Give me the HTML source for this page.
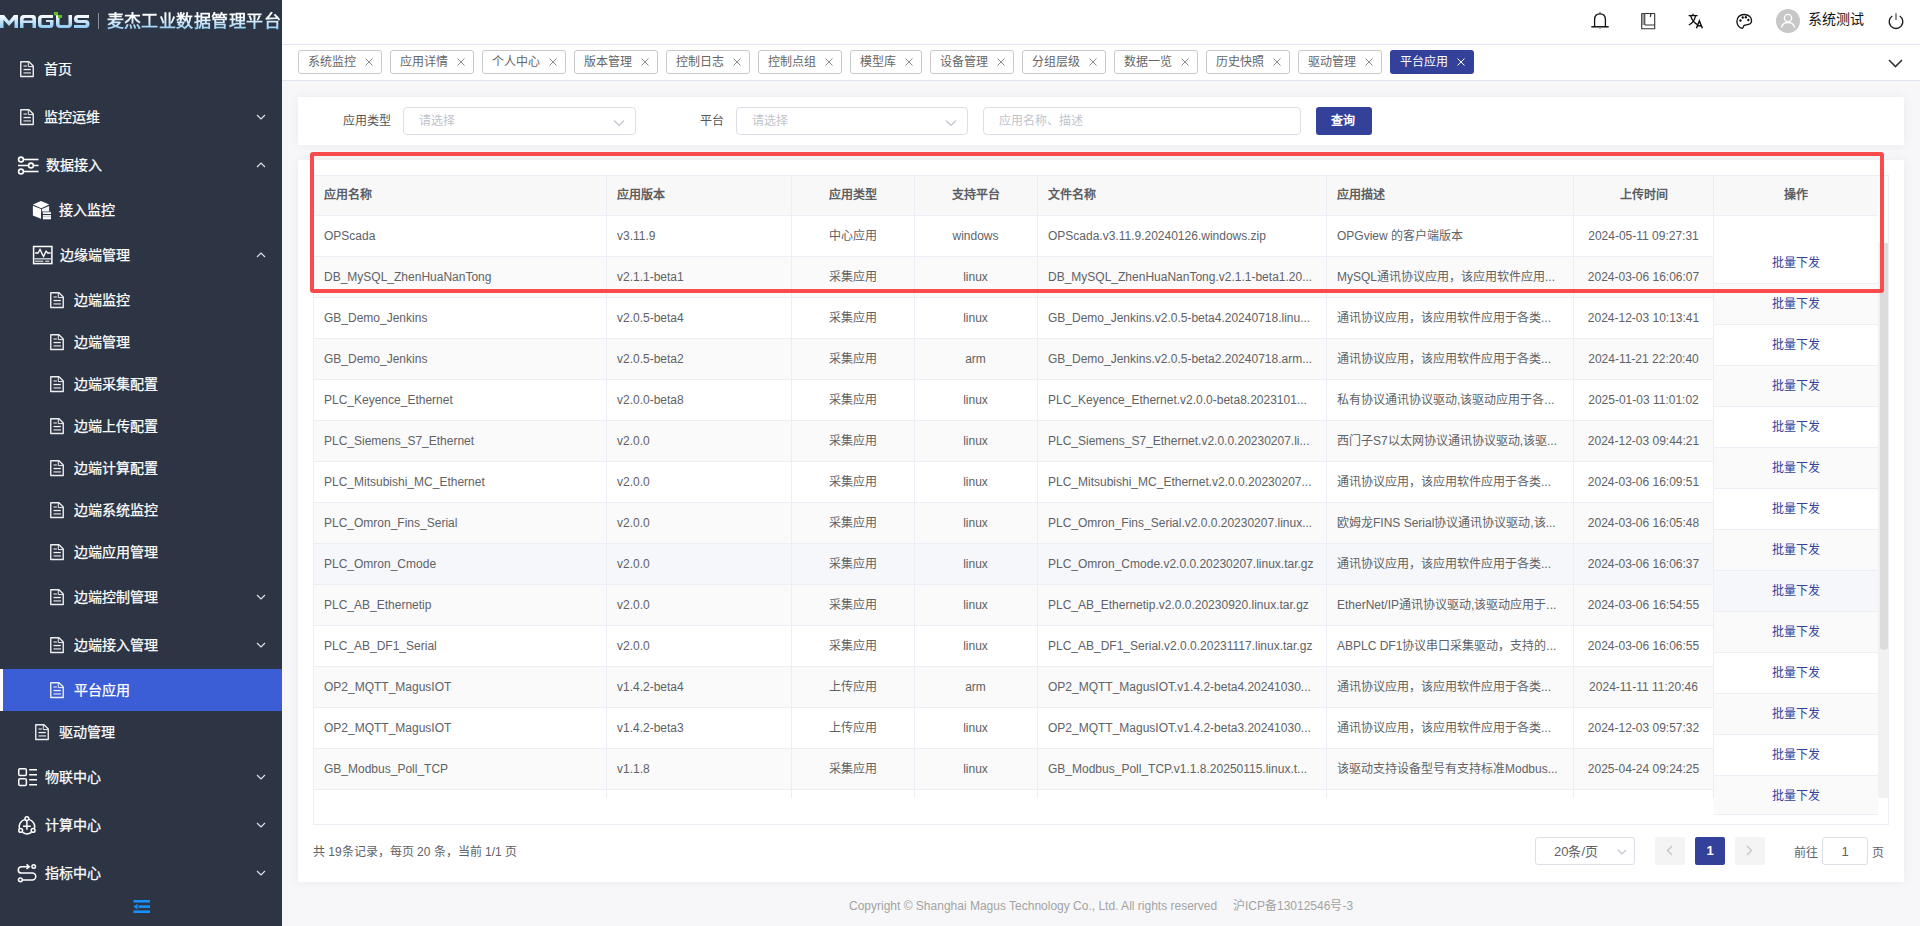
<!DOCTYPE html>
<html lang="zh-CN"><head><meta charset="utf-8"><title>平台应用</title>
<style>
html,body{margin:0;padding:0;width:1920px;height:926px;overflow:hidden;background:#f7f7f9;font-family:"Liberation Sans",sans-serif;}
</style></head><body>
<div id="sb" style="position:absolute;left:0;top:0;width:282px;height:926px;background:#2d3545;overflow:hidden">
<svg style="position:absolute;left:0;top:10px" width="100" height="24" viewBox="0 0 100 24">
<defs><linearGradient id="lg" x1="0" y1="0" x2="0" y2="1"><stop offset="0" stop-color="#ffffff"/><stop offset="1" stop-color="#8ccaf5"/></linearGradient></defs>
<g fill="url(#lg)">
<path d="M0 5 H4 L9 11 L14 5 H18 V18 H14.5 V10 L9 16 L3.5 10 V18 H0 Z"/>
<path d="M20 18 V9 Q20 5 24 5 H33 Q36 5 36 9 V18 H32.5 V13 H23.5 V18 Z M23.5 10.5 H32.5 V9.5 Q32.5 8 31 8 H25 Q23.5 8 23.5 9.5 Z"/>
<path d="M38 9 Q38 5 42 5 H53 V8 H42.5 Q41.5 8 41.5 9 V14 Q41.5 15 42.5 15 H50 V12 H46 V10 H53.5 V14.5 Q53.5 18 50 18 H42 Q38 18 38 14 Z"/>
<path d="M56 5 H59.5 V14 Q59.5 15 60.5 15 H67.5 Q68.5 15 68.5 14 V5 H72 V14 Q72 18 68 18 H60 Q56 18 56 14 Z"/>
<path d="M74 5 H89 V8 H78 Q77.5 8 77.5 9 Q77.5 10 78.5 10 H85.5 Q89.5 10 89.5 14 Q89.5 18 85.5 18 H74 V15 H85 Q86 15 86 14 Q86 13 85 13 H78 Q74 13 74 9 Q74 5 78 5 Z"/>
</g>
<rect x="54" y="2" width="4" height="3.4" fill="#5fbf2a"/>
<rect x="58" y="5" width="4" height="3" fill="#5fbf2a"/>
</svg>
<div style="position:absolute;left:98px;top:13px;width:1px;height:16px;background:#8a8f99"></div>
<div style="position:absolute;left:106.5px;top:11px;font-size:17px;letter-spacing:0.45px;line-height:22px;font-weight:900;color:#bfe3fb;background:linear-gradient(#ffffff 25%,#8fcdf5 85%);-webkit-background-clip:text;background-clip:text;-webkit-text-fill-color:transparent;white-space:nowrap">麦杰工业数据管理平台</div>
<div style="position:absolute;left:0;top:669px;width:282px;height:42px;background:#3b5dd6"></div>
<div style="position:absolute;left:0;top:669px;width:3px;height:42px;background:#ffffff"></div>
<svg style="position:absolute;left:20px;top:61px" width="15" height="18" viewBox="0 0 15 18">
<path d="M0.75 0.75 H9 L13.25 5 V15.5 H0.75 Z" fill="none" stroke="#ededed" stroke-width="1.4" stroke-linejoin="round"/>
<path d="M8.3 1 V5.6 H13" fill="none" stroke="#ededed" stroke-width="1"/>
<rect x="3.5" y="4.3" width="3.4" height="1.4" fill="#ffffff" fill-opacity="0.72"/>
<rect x="3.5" y="7.9" width="7.3" height="1.3" fill="#f2f2f2"/>
<rect x="3.5" y="11" width="7.5" height="1.8" fill="#ffffff" fill-opacity="0.56"/>
</svg>
<div style="position:absolute;left:44px;top:59px;height:20px;line-height:20px;font-size:14px;color:#ffffff;-webkit-text-stroke:0.25px #ffffff;white-space:nowrap">首页</div>
<svg style="position:absolute;left:20px;top:109px" width="15" height="18" viewBox="0 0 15 18">
<path d="M0.75 0.75 H9 L13.25 5 V15.5 H0.75 Z" fill="none" stroke="#ededed" stroke-width="1.4" stroke-linejoin="round"/>
<path d="M8.3 1 V5.6 H13" fill="none" stroke="#ededed" stroke-width="1"/>
<rect x="3.5" y="4.3" width="3.4" height="1.4" fill="#ffffff" fill-opacity="0.72"/>
<rect x="3.5" y="7.9" width="7.3" height="1.3" fill="#f2f2f2"/>
<rect x="3.5" y="11" width="7.5" height="1.8" fill="#ffffff" fill-opacity="0.56"/>
</svg>
<div style="position:absolute;left:44px;top:107px;height:20px;line-height:20px;font-size:14px;color:#ffffff;-webkit-text-stroke:0.25px #ffffff;white-space:nowrap">监控运维</div>
<svg style="position:absolute;left:256px;top:114px" width="10" height="6" viewBox="0 0 10 6"><path d="M1 1 L5 5 L9 1" fill="none" stroke="#dfe1e6" stroke-width="1.2"/></svg>
<svg style="position:absolute;left:17px;top:156px" width="23" height="20" viewBox="0 0 23 20">
<g fill="none" stroke="#ffffff" stroke-width="1.6">
<circle cx="4" cy="3.5" r="2.4"/><path d="M6.4 3.5 H21.5"/>
<circle cx="14" cy="9.5" r="2.4"/><path d="M1 9.5 H11.6 M16.4 9.5 H21.5"/>
<circle cx="4" cy="15.5" r="2.4"/><path d="M6.4 15.5 H21.5"/>
</g></svg>
<div style="position:absolute;left:46px;top:155px;height:20px;line-height:20px;font-size:14px;color:#ffffff;-webkit-text-stroke:0.25px #ffffff;white-space:nowrap">数据接入</div>
<svg style="position:absolute;left:256px;top:162px" width="10" height="6" viewBox="0 0 10 6"><path d="M1 5 L5 1 L9 5" fill="none" stroke="#dfe1e6" stroke-width="1.2"/></svg>
<svg style="position:absolute;left:32px;top:200px" width="20" height="20" viewBox="0 0 20 20">
<path d="M0.9 4.4 L9 0.9 L17.2 4.4 L9.3 8.3 Z" fill="#ffffff"/>
<path d="M0.9 5.7 L9 9 V18.7 L0.9 15.4 Z" fill="#ffffff"/>
<path d="M9.9 9 L17.1 6 V11.5 H9.9 Z" fill="#f4f4f4"/>
<rect x="10.9" y="11.9" width="8.1" height="2.1" fill="#ffffff"/>
<rect x="10.9" y="11.9" width="8.1" height="0.9" fill="#c2c4cc"/>
<rect x="10.9" y="15.1" width="8.1" height="4.2" fill="#ffffff"/>
<rect x="10.9" y="16.2" width="8.1" height="1.1" fill="#c2c4cc"/>
</svg>
<div style="position:absolute;left:59px;top:200px;height:20px;line-height:20px;font-size:14px;color:#ffffff;-webkit-text-stroke:0.25px #ffffff;white-space:nowrap">接入监控</div>
<svg style="position:absolute;left:32px;top:245px" width="22" height="20" viewBox="0 0 22 20">
<rect x="1.6" y="1.5" width="18.3" height="17.1" fill="none" stroke="#ffffff" stroke-width="1.5"/>
<path d="M3.1 8 H6 L8 4.4 L11.5 11.5 L14.1 6.3 L15.8 8 H18.7" fill="none" stroke="#ffffff" stroke-width="1.4" stroke-linejoin="miter"/>
<rect x="2.4" y="13.2" width="16.6" height="1.3" fill="#e0e0e4"/>
<rect x="3.1" y="15.7" width="8.1" height="1" fill="#ffffff"/>
<rect x="13.2" y="15.7" width="4.2" height="1" fill="#ffffff"/>
</svg>
<div style="position:absolute;left:60px;top:245px;height:20px;line-height:20px;font-size:14px;color:#ffffff;-webkit-text-stroke:0.25px #ffffff;white-space:nowrap">边缘端管理</div>
<svg style="position:absolute;left:256px;top:252px" width="10" height="6" viewBox="0 0 10 6"><path d="M1 5 L5 1 L9 5" fill="none" stroke="#dfe1e6" stroke-width="1.2"/></svg>
<svg style="position:absolute;left:50px;top:292px" width="15" height="18" viewBox="0 0 15 18">
<path d="M0.75 0.75 H9 L13.25 5 V15.5 H0.75 Z" fill="none" stroke="#ededed" stroke-width="1.4" stroke-linejoin="round"/>
<path d="M8.3 1 V5.6 H13" fill="none" stroke="#ededed" stroke-width="1"/>
<rect x="3.5" y="4.3" width="3.4" height="1.4" fill="#ffffff" fill-opacity="0.72"/>
<rect x="3.5" y="7.9" width="7.3" height="1.3" fill="#f2f2f2"/>
<rect x="3.5" y="11" width="7.5" height="1.8" fill="#ffffff" fill-opacity="0.56"/>
</svg>
<div style="position:absolute;left:74px;top:290px;height:20px;line-height:20px;font-size:14px;color:#ffffff;-webkit-text-stroke:0.25px #ffffff;white-space:nowrap">边端监控</div>
<svg style="position:absolute;left:50px;top:334px" width="15" height="18" viewBox="0 0 15 18">
<path d="M0.75 0.75 H9 L13.25 5 V15.5 H0.75 Z" fill="none" stroke="#ededed" stroke-width="1.4" stroke-linejoin="round"/>
<path d="M8.3 1 V5.6 H13" fill="none" stroke="#ededed" stroke-width="1"/>
<rect x="3.5" y="4.3" width="3.4" height="1.4" fill="#ffffff" fill-opacity="0.72"/>
<rect x="3.5" y="7.9" width="7.3" height="1.3" fill="#f2f2f2"/>
<rect x="3.5" y="11" width="7.5" height="1.8" fill="#ffffff" fill-opacity="0.56"/>
</svg>
<div style="position:absolute;left:74px;top:332px;height:20px;line-height:20px;font-size:14px;color:#ffffff;-webkit-text-stroke:0.25px #ffffff;white-space:nowrap">边端管理</div>
<svg style="position:absolute;left:50px;top:376px" width="15" height="18" viewBox="0 0 15 18">
<path d="M0.75 0.75 H9 L13.25 5 V15.5 H0.75 Z" fill="none" stroke="#ededed" stroke-width="1.4" stroke-linejoin="round"/>
<path d="M8.3 1 V5.6 H13" fill="none" stroke="#ededed" stroke-width="1"/>
<rect x="3.5" y="4.3" width="3.4" height="1.4" fill="#ffffff" fill-opacity="0.72"/>
<rect x="3.5" y="7.9" width="7.3" height="1.3" fill="#f2f2f2"/>
<rect x="3.5" y="11" width="7.5" height="1.8" fill="#ffffff" fill-opacity="0.56"/>
</svg>
<div style="position:absolute;left:74px;top:374px;height:20px;line-height:20px;font-size:14px;color:#ffffff;-webkit-text-stroke:0.25px #ffffff;white-space:nowrap">边端采集配置</div>
<svg style="position:absolute;left:50px;top:418px" width="15" height="18" viewBox="0 0 15 18">
<path d="M0.75 0.75 H9 L13.25 5 V15.5 H0.75 Z" fill="none" stroke="#ededed" stroke-width="1.4" stroke-linejoin="round"/>
<path d="M8.3 1 V5.6 H13" fill="none" stroke="#ededed" stroke-width="1"/>
<rect x="3.5" y="4.3" width="3.4" height="1.4" fill="#ffffff" fill-opacity="0.72"/>
<rect x="3.5" y="7.9" width="7.3" height="1.3" fill="#f2f2f2"/>
<rect x="3.5" y="11" width="7.5" height="1.8" fill="#ffffff" fill-opacity="0.56"/>
</svg>
<div style="position:absolute;left:74px;top:416px;height:20px;line-height:20px;font-size:14px;color:#ffffff;-webkit-text-stroke:0.25px #ffffff;white-space:nowrap">边端上传配置</div>
<svg style="position:absolute;left:50px;top:460px" width="15" height="18" viewBox="0 0 15 18">
<path d="M0.75 0.75 H9 L13.25 5 V15.5 H0.75 Z" fill="none" stroke="#ededed" stroke-width="1.4" stroke-linejoin="round"/>
<path d="M8.3 1 V5.6 H13" fill="none" stroke="#ededed" stroke-width="1"/>
<rect x="3.5" y="4.3" width="3.4" height="1.4" fill="#ffffff" fill-opacity="0.72"/>
<rect x="3.5" y="7.9" width="7.3" height="1.3" fill="#f2f2f2"/>
<rect x="3.5" y="11" width="7.5" height="1.8" fill="#ffffff" fill-opacity="0.56"/>
</svg>
<div style="position:absolute;left:74px;top:458px;height:20px;line-height:20px;font-size:14px;color:#ffffff;-webkit-text-stroke:0.25px #ffffff;white-space:nowrap">边端计算配置</div>
<svg style="position:absolute;left:50px;top:502px" width="15" height="18" viewBox="0 0 15 18">
<path d="M0.75 0.75 H9 L13.25 5 V15.5 H0.75 Z" fill="none" stroke="#ededed" stroke-width="1.4" stroke-linejoin="round"/>
<path d="M8.3 1 V5.6 H13" fill="none" stroke="#ededed" stroke-width="1"/>
<rect x="3.5" y="4.3" width="3.4" height="1.4" fill="#ffffff" fill-opacity="0.72"/>
<rect x="3.5" y="7.9" width="7.3" height="1.3" fill="#f2f2f2"/>
<rect x="3.5" y="11" width="7.5" height="1.8" fill="#ffffff" fill-opacity="0.56"/>
</svg>
<div style="position:absolute;left:74px;top:500px;height:20px;line-height:20px;font-size:14px;color:#ffffff;-webkit-text-stroke:0.25px #ffffff;white-space:nowrap">边端系统监控</div>
<svg style="position:absolute;left:50px;top:544px" width="15" height="18" viewBox="0 0 15 18">
<path d="M0.75 0.75 H9 L13.25 5 V15.5 H0.75 Z" fill="none" stroke="#ededed" stroke-width="1.4" stroke-linejoin="round"/>
<path d="M8.3 1 V5.6 H13" fill="none" stroke="#ededed" stroke-width="1"/>
<rect x="3.5" y="4.3" width="3.4" height="1.4" fill="#ffffff" fill-opacity="0.72"/>
<rect x="3.5" y="7.9" width="7.3" height="1.3" fill="#f2f2f2"/>
<rect x="3.5" y="11" width="7.5" height="1.8" fill="#ffffff" fill-opacity="0.56"/>
</svg>
<div style="position:absolute;left:74px;top:542px;height:20px;line-height:20px;font-size:14px;color:#ffffff;-webkit-text-stroke:0.25px #ffffff;white-space:nowrap">边端应用管理</div>
<svg style="position:absolute;left:50px;top:589px" width="15" height="18" viewBox="0 0 15 18">
<path d="M0.75 0.75 H9 L13.25 5 V15.5 H0.75 Z" fill="none" stroke="#ededed" stroke-width="1.4" stroke-linejoin="round"/>
<path d="M8.3 1 V5.6 H13" fill="none" stroke="#ededed" stroke-width="1"/>
<rect x="3.5" y="4.3" width="3.4" height="1.4" fill="#ffffff" fill-opacity="0.72"/>
<rect x="3.5" y="7.9" width="7.3" height="1.3" fill="#f2f2f2"/>
<rect x="3.5" y="11" width="7.5" height="1.8" fill="#ffffff" fill-opacity="0.56"/>
</svg>
<div style="position:absolute;left:74px;top:587px;height:20px;line-height:20px;font-size:14px;color:#ffffff;-webkit-text-stroke:0.25px #ffffff;white-space:nowrap">边端控制管理</div>
<svg style="position:absolute;left:256px;top:594px" width="10" height="6" viewBox="0 0 10 6"><path d="M1 1 L5 5 L9 1" fill="none" stroke="#dfe1e6" stroke-width="1.2"/></svg>
<svg style="position:absolute;left:50px;top:637px" width="15" height="18" viewBox="0 0 15 18">
<path d="M0.75 0.75 H9 L13.25 5 V15.5 H0.75 Z" fill="none" stroke="#ededed" stroke-width="1.4" stroke-linejoin="round"/>
<path d="M8.3 1 V5.6 H13" fill="none" stroke="#ededed" stroke-width="1"/>
<rect x="3.5" y="4.3" width="3.4" height="1.4" fill="#ffffff" fill-opacity="0.72"/>
<rect x="3.5" y="7.9" width="7.3" height="1.3" fill="#f2f2f2"/>
<rect x="3.5" y="11" width="7.5" height="1.8" fill="#ffffff" fill-opacity="0.56"/>
</svg>
<div style="position:absolute;left:74px;top:635px;height:20px;line-height:20px;font-size:14px;color:#ffffff;-webkit-text-stroke:0.25px #ffffff;white-space:nowrap">边端接入管理</div>
<svg style="position:absolute;left:256px;top:642px" width="10" height="6" viewBox="0 0 10 6"><path d="M1 1 L5 5 L9 1" fill="none" stroke="#dfe1e6" stroke-width="1.2"/></svg>
<svg style="position:absolute;left:50px;top:682px" width="15" height="18" viewBox="0 0 15 18">
<path d="M0.75 0.75 H9 L13.25 5 V15.5 H0.75 Z" fill="none" stroke="#ededed" stroke-width="1.4" stroke-linejoin="round"/>
<path d="M8.3 1 V5.6 H13" fill="none" stroke="#ededed" stroke-width="1"/>
<rect x="3.5" y="4.3" width="3.4" height="1.4" fill="#ffffff" fill-opacity="0.72"/>
<rect x="3.5" y="7.9" width="7.3" height="1.3" fill="#f2f2f2"/>
<rect x="3.5" y="11" width="7.5" height="1.8" fill="#ffffff" fill-opacity="0.56"/>
</svg>
<div style="position:absolute;left:74px;top:680px;height:20px;line-height:20px;font-size:14px;color:#ffffff;-webkit-text-stroke:0.25px #ffffff;white-space:nowrap">平台应用</div>
<svg style="position:absolute;left:35px;top:724px" width="15" height="18" viewBox="0 0 15 18">
<path d="M0.75 0.75 H9 L13.25 5 V15.5 H0.75 Z" fill="none" stroke="#ededed" stroke-width="1.4" stroke-linejoin="round"/>
<path d="M8.3 1 V5.6 H13" fill="none" stroke="#ededed" stroke-width="1"/>
<rect x="3.5" y="4.3" width="3.4" height="1.4" fill="#ffffff" fill-opacity="0.72"/>
<rect x="3.5" y="7.9" width="7.3" height="1.3" fill="#f2f2f2"/>
<rect x="3.5" y="11" width="7.5" height="1.8" fill="#ffffff" fill-opacity="0.56"/>
</svg>
<div style="position:absolute;left:59px;top:722px;height:20px;line-height:20px;font-size:14px;color:#ffffff;-webkit-text-stroke:0.25px #ffffff;white-space:nowrap">驱动管理</div>
<svg style="position:absolute;left:17px;top:767px" width="22" height="21" viewBox="0 0 22 21">
<g fill="none" stroke="#ffffff" stroke-width="1.5">
<rect x="1.75" y="1.65" width="7.6" height="6.8" rx="1.3"/><rect x="1.75" y="11.75" width="7.6" height="6.7" rx="1.3"/>
<path d="M12.2 2.7 H20 M12.2 7.7 H20 M12.2 12.8 H20 M12.2 17.8 H20" stroke-width="1.4"/>
</g></svg>
<div style="position:absolute;left:45px;top:767px;height:20px;line-height:20px;font-size:14px;color:#ffffff;-webkit-text-stroke:0.25px #ffffff;white-space:nowrap">物联中心</div>
<svg style="position:absolute;left:256px;top:774px" width="10" height="6" viewBox="0 0 10 6"><path d="M1 1 L5 5 L9 1" fill="none" stroke="#dfe1e6" stroke-width="1.2"/></svg>
<svg style="position:absolute;left:17px;top:815px" width="21" height="21" viewBox="0 0 21 21">
<g fill="none" stroke="#ffffff" stroke-width="1.5">
<path d="M7.9 4.4 A7.6 7.6 0 0 0 2.5 13.6 M12 4.4 A7.6 7.6 0 0 1 17.4 13.6 M5.6 17.4 A7.6 7.6 0 0 0 14.4 17.4"/>
<circle cx="9.9" cy="3.7" r="1.9"/><circle cx="3.7" cy="15.4" r="1.9"/><circle cx="16.1" cy="15.4" r="1.9"/>
<path d="M9.9 5.7 V14.8 M6 11.2 H13.8"/>
</g></svg>
<div style="position:absolute;left:45px;top:815px;height:20px;line-height:20px;font-size:14px;color:#ffffff;-webkit-text-stroke:0.25px #ffffff;white-space:nowrap">计算中心</div>
<svg style="position:absolute;left:256px;top:822px" width="10" height="6" viewBox="0 0 10 6"><path d="M1 1 L5 5 L9 1" fill="none" stroke="#dfe1e6" stroke-width="1.2"/></svg>
<svg style="position:absolute;left:17px;top:863px" width="21" height="21" viewBox="0 0 21 21">
<g fill="none" stroke="#ffffff" stroke-width="1.5">
<path d="M12 3.7 H4.5 A3.2 3.2 0 0 0 4.5 10.1 H15.3 A3.45 3.45 0 0 1 15.3 17 H5.6"/>
<path d="M9.5 1.4 L12.3 3.7 L9.5 6"/>
<circle cx="16.7" cy="3.6" r="1.75"/><circle cx="3.4" cy="16.8" r="1.9"/>
</g></svg>
<div style="position:absolute;left:45px;top:863px;height:20px;line-height:20px;font-size:14px;color:#ffffff;-webkit-text-stroke:0.25px #ffffff;white-space:nowrap">指标中心</div>
<svg style="position:absolute;left:256px;top:870px" width="10" height="6" viewBox="0 0 10 6"><path d="M1 1 L5 5 L9 1" fill="none" stroke="#dfe1e6" stroke-width="1.2"/></svg>
<svg style="position:absolute;left:133px;top:900px" width="18" height="14" viewBox="0 0 18 14">
<rect x="0.5" y="0" width="16.5" height="2.6" fill="#1890ff"/>
<rect x="5.5" y="5.3" width="11.5" height="2.6" fill="#1890ff"/>
<path d="M0.5 6.6 L4.5 3.8 V9.4 Z" fill="#1890ff"/>
<rect x="0.5" y="10.4" width="16.5" height="2.6" fill="#1890ff"/>
</svg>
</div>
<div style="position:absolute;left:282px;top:0;width:1638px;height:45px;background:#fff;border-bottom:1px solid #e3e8f0;box-sizing:border-box"></div>
<svg style="position:absolute;left:1590px;top:11px" width="20" height="20" viewBox="0 0 20 20">
<path d="M4.6 15.6 V8.6 Q4.6 2.8 10 2.8 Q15.4 2.8 15.4 8.6 V15.6" fill="none" stroke="#111" stroke-width="1.3"/>
<path d="M1.3 15.8 H18.7" stroke="#111" stroke-width="1.5"/>
<path d="M8.9 2.4 L10 1 L11.1 2.4 Z" fill="#111"/>
<path d="M8.8 16.6 H11.2 L10 18.4 Z" fill="#888"/>
</svg>
<svg style="position:absolute;left:1640px;top:12px" width="17" height="18" viewBox="0 0 17 18">
<rect x="1.7" y="1.5" width="13" height="15.3" rx="0.4" fill="none" stroke="#333" stroke-width="1.1"/>
<rect x="2.1" y="1.9" width="2.5" height="11" fill="#9a9a9a"/>
<path d="M4.8 1.8 V13 H14.5" fill="none" stroke="#333" stroke-width="1"/>
<path d="M10.8 2 L10.4 4.8" stroke="#333" stroke-width="1.3"/>
</svg>
<svg style="position:absolute;left:1688px;top:13px" width="16" height="17" viewBox="0 0 16 17">
<g fill="none" stroke="#111" stroke-width="1.3">
<path d="M5 0.8 V2.4"/><path d="M0.6 2.6 H9.6"/>
<path d="M2.6 2.8 Q4.5 9 9.4 11.6"/><path d="M7.6 2.8 Q6 9.6 0.8 12"/>
</g>
<g fill="none" stroke="#111" stroke-width="1.5">
<path d="M8.4 15.2 L11.4 8 L14.4 15.2"/><path d="M9.6 12.8 H13.2"/>
</g>
</svg>
<svg style="position:absolute;left:1735.5px;top:12.5px" width="17" height="17" viewBox="0 0 19 18" preserveAspectRatio="none">
<path d="M9 1.5 C4 1.5 1 5 1 9 C1 12.5 3.8 16.2 6.8 16.2 C8.5 16.2 7.8 13.8 9.2 13 C11 12 17.2 13.5 17.4 8.5 C17.6 4.5 14 1.5 9 1.5 Z" fill="none" stroke="#111" stroke-width="1.5"/>
<circle cx="5" cy="8" r="1.3" fill="#111"/><circle cx="7.5" cy="4.8" r="1.3" fill="#111"/><circle cx="11" cy="4.5" r="1.3" fill="#111"/><circle cx="13.8" cy="7.4" r="1.3" fill="#111"/>
</svg>
<svg style="position:absolute;left:1776px;top:9px" width="24" height="24" viewBox="0 0 24 24">
<circle cx="12" cy="12" r="12" fill="#c7c7c7"/>
<circle cx="12" cy="9" r="3.6" fill="none" stroke="#fff" stroke-width="1.3"/>
<path d="M5.5 18.5 Q6.5 13.5 12 13.5 Q17.5 13.5 18.5 18.5" fill="none" stroke="#fff" stroke-width="1.3"/>
</svg>
<div style="position:absolute;left:1808px;top:9px;font-size:14px;line-height:20px;color:#111;white-space:nowrap">系统测试</div>
<svg style="position:absolute;left:1887px;top:12px" width="18" height="18" viewBox="0 0 18 18">
<path d="M5.3 4 A6.8 6.8 0 1 0 12.7 4" fill="none" stroke="#222" stroke-width="1.4"/>
<path d="M9 1.2 V8" stroke="#777" stroke-width="1.6"/>
</svg>
<div style="position:absolute;left:282px;top:45px;width:1638px;height:36px;background:#fff;border-bottom:1px solid #dfe5ee;box-sizing:border-box"></div>
<div style="position:absolute;left:298px;top:50px;width:84px;height:24px;box-sizing:border-box;border-radius:3px;border:1px solid #c9c9c9;background:#fff"></div>
<div style="position:absolute;left:308px;top:54px;font-size:12px;line-height:16px;color:#666;white-space:nowrap">系统监控</div>
<svg style="position:absolute;left:365px;top:58px" width="8" height="8" viewBox="0 0 8 8"><path d="M0.5 0.5 L7.5 7.5 M7.5 0.5 L0.5 7.5" stroke="#8a8a8a" stroke-width="1"/></svg>
<div style="position:absolute;left:390px;top:50px;width:84px;height:24px;box-sizing:border-box;border-radius:3px;border:1px solid #c9c9c9;background:#fff"></div>
<div style="position:absolute;left:400px;top:54px;font-size:12px;line-height:16px;color:#666;white-space:nowrap">应用详情</div>
<svg style="position:absolute;left:457px;top:58px" width="8" height="8" viewBox="0 0 8 8"><path d="M0.5 0.5 L7.5 7.5 M7.5 0.5 L0.5 7.5" stroke="#8a8a8a" stroke-width="1"/></svg>
<div style="position:absolute;left:482px;top:50px;width:84px;height:24px;box-sizing:border-box;border-radius:3px;border:1px solid #c9c9c9;background:#fff"></div>
<div style="position:absolute;left:492px;top:54px;font-size:12px;line-height:16px;color:#666;white-space:nowrap">个人中心</div>
<svg style="position:absolute;left:549px;top:58px" width="8" height="8" viewBox="0 0 8 8"><path d="M0.5 0.5 L7.5 7.5 M7.5 0.5 L0.5 7.5" stroke="#8a8a8a" stroke-width="1"/></svg>
<div style="position:absolute;left:574px;top:50px;width:84px;height:24px;box-sizing:border-box;border-radius:3px;border:1px solid #c9c9c9;background:#fff"></div>
<div style="position:absolute;left:584px;top:54px;font-size:12px;line-height:16px;color:#666;white-space:nowrap">版本管理</div>
<svg style="position:absolute;left:641px;top:58px" width="8" height="8" viewBox="0 0 8 8"><path d="M0.5 0.5 L7.5 7.5 M7.5 0.5 L0.5 7.5" stroke="#8a8a8a" stroke-width="1"/></svg>
<div style="position:absolute;left:666px;top:50px;width:84px;height:24px;box-sizing:border-box;border-radius:3px;border:1px solid #c9c9c9;background:#fff"></div>
<div style="position:absolute;left:676px;top:54px;font-size:12px;line-height:16px;color:#666;white-space:nowrap">控制日志</div>
<svg style="position:absolute;left:733px;top:58px" width="8" height="8" viewBox="0 0 8 8"><path d="M0.5 0.5 L7.5 7.5 M7.5 0.5 L0.5 7.5" stroke="#8a8a8a" stroke-width="1"/></svg>
<div style="position:absolute;left:758px;top:50px;width:84px;height:24px;box-sizing:border-box;border-radius:3px;border:1px solid #c9c9c9;background:#fff"></div>
<div style="position:absolute;left:768px;top:54px;font-size:12px;line-height:16px;color:#666;white-space:nowrap">控制点组</div>
<svg style="position:absolute;left:825px;top:58px" width="8" height="8" viewBox="0 0 8 8"><path d="M0.5 0.5 L7.5 7.5 M7.5 0.5 L0.5 7.5" stroke="#8a8a8a" stroke-width="1"/></svg>
<div style="position:absolute;left:850px;top:50px;width:72px;height:24px;box-sizing:border-box;border-radius:3px;border:1px solid #c9c9c9;background:#fff"></div>
<div style="position:absolute;left:860px;top:54px;font-size:12px;line-height:16px;color:#666;white-space:nowrap">模型库</div>
<svg style="position:absolute;left:905px;top:58px" width="8" height="8" viewBox="0 0 8 8"><path d="M0.5 0.5 L7.5 7.5 M7.5 0.5 L0.5 7.5" stroke="#8a8a8a" stroke-width="1"/></svg>
<div style="position:absolute;left:930px;top:50px;width:84px;height:24px;box-sizing:border-box;border-radius:3px;border:1px solid #c9c9c9;background:#fff"></div>
<div style="position:absolute;left:940px;top:54px;font-size:12px;line-height:16px;color:#666;white-space:nowrap">设备管理</div>
<svg style="position:absolute;left:997px;top:58px" width="8" height="8" viewBox="0 0 8 8"><path d="M0.5 0.5 L7.5 7.5 M7.5 0.5 L0.5 7.5" stroke="#8a8a8a" stroke-width="1"/></svg>
<div style="position:absolute;left:1022px;top:50px;width:84px;height:24px;box-sizing:border-box;border-radius:3px;border:1px solid #c9c9c9;background:#fff"></div>
<div style="position:absolute;left:1032px;top:54px;font-size:12px;line-height:16px;color:#666;white-space:nowrap">分组层级</div>
<svg style="position:absolute;left:1089px;top:58px" width="8" height="8" viewBox="0 0 8 8"><path d="M0.5 0.5 L7.5 7.5 M7.5 0.5 L0.5 7.5" stroke="#8a8a8a" stroke-width="1"/></svg>
<div style="position:absolute;left:1114px;top:50px;width:84px;height:24px;box-sizing:border-box;border-radius:3px;border:1px solid #c9c9c9;background:#fff"></div>
<div style="position:absolute;left:1124px;top:54px;font-size:12px;line-height:16px;color:#666;white-space:nowrap">数据一览</div>
<svg style="position:absolute;left:1181px;top:58px" width="8" height="8" viewBox="0 0 8 8"><path d="M0.5 0.5 L7.5 7.5 M7.5 0.5 L0.5 7.5" stroke="#8a8a8a" stroke-width="1"/></svg>
<div style="position:absolute;left:1206px;top:50px;width:84px;height:24px;box-sizing:border-box;border-radius:3px;border:1px solid #c9c9c9;background:#fff"></div>
<div style="position:absolute;left:1216px;top:54px;font-size:12px;line-height:16px;color:#666;white-space:nowrap">历史快照</div>
<svg style="position:absolute;left:1273px;top:58px" width="8" height="8" viewBox="0 0 8 8"><path d="M0.5 0.5 L7.5 7.5 M7.5 0.5 L0.5 7.5" stroke="#8a8a8a" stroke-width="1"/></svg>
<div style="position:absolute;left:1298px;top:50px;width:84px;height:24px;box-sizing:border-box;border-radius:3px;border:1px solid #c9c9c9;background:#fff"></div>
<div style="position:absolute;left:1308px;top:54px;font-size:12px;line-height:16px;color:#666;white-space:nowrap">驱动管理</div>
<svg style="position:absolute;left:1365px;top:58px" width="8" height="8" viewBox="0 0 8 8"><path d="M0.5 0.5 L7.5 7.5 M7.5 0.5 L0.5 7.5" stroke="#8a8a8a" stroke-width="1"/></svg>
<div style="position:absolute;left:1390px;top:50px;width:84px;height:24px;box-sizing:border-box;border-radius:3px;background:#33419a;"></div>
<div style="position:absolute;left:1400px;top:54px;font-size:12px;line-height:16px;color:#fff;white-space:nowrap">平台应用</div>
<svg style="position:absolute;left:1457px;top:58px" width="8" height="8" viewBox="0 0 8 8"><path d="M0.5 0.5 L7.5 7.5 M7.5 0.5 L0.5 7.5" stroke="#fff" stroke-width="1"/></svg>
<svg style="position:absolute;left:1888px;top:59px" width="15" height="9" viewBox="0 0 15 9"><path d="M1 1 L7.5 7.5 L14 1" fill="none" stroke="#333" stroke-width="1.6"/></svg>
<div style="position:absolute;left:282px;top:81px;width:1638px;height:845px;background:#f7f7f9"></div>
<div style="position:absolute;left:298px;top:97px;width:1606px;height:48px;background:#fff;box-shadow:0 0 10px rgba(40,50,90,0.07)"></div>
<div style="position:absolute;left:343px;top:113px;font-size:12px;line-height:16px;color:#555;white-space:nowrap;">应用类型</div>
<div style="position:absolute;left:403px;top:107px;width:233px;height:28px;box-sizing:border-box;border:1px solid #dcdfe6;border-radius:4px;background:#fff"></div><div style="position:absolute;left:419px;top:113px;font-size:12px;line-height:16px;color:#c0c4cc;white-space:nowrap;">请选择</div><svg style="position:absolute;left:613px;top:119px" width="12" height="8" viewBox="0 0 12 8"><path d="M1 1.5 L6 6.5 L11 1.5" fill="none" stroke="#bfc3cb" stroke-width="1.1"/></svg>
<div style="position:absolute;left:700px;top:113px;font-size:12px;line-height:16px;color:#555;white-space:nowrap;">平台</div>
<div style="position:absolute;left:736px;top:107px;width:232px;height:28px;box-sizing:border-box;border:1px solid #dcdfe6;border-radius:4px;background:#fff"></div><div style="position:absolute;left:752px;top:113px;font-size:12px;line-height:16px;color:#c0c4cc;white-space:nowrap;">请选择</div><svg style="position:absolute;left:945px;top:119px" width="12" height="8" viewBox="0 0 12 8"><path d="M1 1.5 L6 6.5 L11 1.5" fill="none" stroke="#bfc3cb" stroke-width="1.1"/></svg>
<div style="position:absolute;left:983px;top:107px;width:318px;height:28px;box-sizing:border-box;border:1px solid #dcdfe6;border-radius:4px;background:#fff"></div><div style="position:absolute;left:999px;top:113px;font-size:12px;line-height:16px;color:#c0c4cc;white-space:nowrap;">应用名称、描述</div>
<div style="position:absolute;left:1316px;top:107px;width:56px;height:28px;background:#33419a;border-radius:3px"></div>
<div style="position:absolute;left:1331px;top:113px;font-size:12px;line-height:16px;color:#fff;white-space:nowrap;font-weight:bold;">查询</div>
<div style="position:absolute;left:298px;top:160px;width:1606px;height:722px;background:#fff;box-shadow:0 0 10px rgba(40,50,90,0.07)"></div>
<div style="position:absolute;left:313px;top:175px;width:1576px;height:650px;box-sizing:border-box;border:1px solid #ebeef5"></div>
<div style="position:absolute;left:314px;top:176px;width:1564px;height:40px;background:#f8f8f9;border-bottom:1px solid #ebeef5;box-sizing:border-box"></div>
<div style="position:absolute;left:314px;top:216px;width:1400px;height:41px;background:#fff;border-bottom:1px solid #ebeef5;box-sizing:border-box"></div>
<div style="position:absolute;left:314px;top:257px;width:1400px;height:41px;background:#fafafa;border-bottom:1px solid #ebeef5;box-sizing:border-box"></div>
<div style="position:absolute;left:314px;top:298px;width:1400px;height:41px;background:#fff;border-bottom:1px solid #ebeef5;box-sizing:border-box"></div>
<div style="position:absolute;left:314px;top:339px;width:1400px;height:41px;background:#fafafa;border-bottom:1px solid #ebeef5;box-sizing:border-box"></div>
<div style="position:absolute;left:314px;top:380px;width:1400px;height:41px;background:#fff;border-bottom:1px solid #ebeef5;box-sizing:border-box"></div>
<div style="position:absolute;left:314px;top:421px;width:1400px;height:41px;background:#fafafa;border-bottom:1px solid #ebeef5;box-sizing:border-box"></div>
<div style="position:absolute;left:314px;top:462px;width:1400px;height:41px;background:#fff;border-bottom:1px solid #ebeef5;box-sizing:border-box"></div>
<div style="position:absolute;left:314px;top:503px;width:1400px;height:41px;background:#fafafa;border-bottom:1px solid #ebeef5;box-sizing:border-box"></div>
<div style="position:absolute;left:314px;top:544px;width:1400px;height:41px;background:#f5f7fa;border-bottom:1px solid #ebeef5;box-sizing:border-box"></div>
<div style="position:absolute;left:314px;top:585px;width:1400px;height:41px;background:#fafafa;border-bottom:1px solid #ebeef5;box-sizing:border-box"></div>
<div style="position:absolute;left:314px;top:626px;width:1400px;height:41px;background:#fff;border-bottom:1px solid #ebeef5;box-sizing:border-box"></div>
<div style="position:absolute;left:314px;top:667px;width:1400px;height:41px;background:#fafafa;border-bottom:1px solid #ebeef5;box-sizing:border-box"></div>
<div style="position:absolute;left:314px;top:708px;width:1400px;height:41px;background:#fff;border-bottom:1px solid #ebeef5;box-sizing:border-box"></div>
<div style="position:absolute;left:314px;top:749px;width:1400px;height:41px;background:#fafafa;border-bottom:1px solid #ebeef5;box-sizing:border-box"></div>
<div style="position:absolute;left:606px;top:176px;width:1px;height:622px;background:#ebeef5"></div>
<div style="position:absolute;left:791px;top:176px;width:1px;height:622px;background:#ebeef5"></div>
<div style="position:absolute;left:914px;top:176px;width:1px;height:622px;background:#ebeef5"></div>
<div style="position:absolute;left:1037px;top:176px;width:1px;height:622px;background:#ebeef5"></div>
<div style="position:absolute;left:1326px;top:176px;width:1px;height:622px;background:#ebeef5"></div>
<div style="position:absolute;left:1573px;top:176px;width:1px;height:622px;background:#ebeef5"></div>
<div style="position:absolute;left:1714px;top:176px;width:1px;height:622px;background:#ebeef5"></div>
<div style="position:absolute;left:324px;top:187px;font-size:12px;line-height:16px;color:#5c5e63;white-space:nowrap;font-weight:bold;">应用名称</div>
<div style="position:absolute;left:617px;top:187px;font-size:12px;line-height:16px;color:#5c5e63;white-space:nowrap;font-weight:bold;">应用版本</div>
<div style="position:absolute;left:791px;width:123px;text-align:center;top:187px;font-size:12px;line-height:16px;color:#5c5e63;white-space:nowrap;font-weight:bold;">应用类型</div>
<div style="position:absolute;left:914px;width:123px;text-align:center;top:187px;font-size:12px;line-height:16px;color:#5c5e63;white-space:nowrap;font-weight:bold;">支持平台</div>
<div style="position:absolute;left:1048px;top:187px;font-size:12px;line-height:16px;color:#5c5e63;white-space:nowrap;font-weight:bold;">文件名称</div>
<div style="position:absolute;left:1337px;top:187px;font-size:12px;line-height:16px;color:#5c5e63;white-space:nowrap;font-weight:bold;">应用描述</div>
<div style="position:absolute;left:1573px;width:141px;text-align:center;top:187px;font-size:12px;line-height:16px;color:#5c5e63;white-space:nowrap;font-weight:bold;">上传时间</div>
<div style="position:absolute;left:324px;top:228px;font-size:12px;line-height:16px;color:#606266;white-space:nowrap;">OPScada</div>
<div style="position:absolute;left:617px;top:228px;font-size:12px;line-height:16px;color:#606266;white-space:nowrap;">v3.11.9</div>
<div style="position:absolute;left:791px;width:123px;text-align:center;top:228px;font-size:12px;line-height:16px;color:#606266;white-space:nowrap;">中心应用</div>
<div style="position:absolute;left:914px;width:123px;text-align:center;top:228px;font-size:12px;line-height:16px;color:#606266;white-space:nowrap;">windows</div>
<div style="position:absolute;left:1048px;top:228px;font-size:12px;line-height:16px;color:#606266;white-space:nowrap;">OPScada.v3.11.9.20240126.windows.zip</div>
<div style="position:absolute;left:1337px;top:228px;font-size:12px;line-height:16px;color:#606266;white-space:nowrap;">OPGview 的客户端版本</div>
<div style="position:absolute;left:1573px;width:141px;text-align:center;top:228px;font-size:12px;line-height:16px;color:#606266;white-space:nowrap;">2024-05-11 09:27:31</div>
<div style="position:absolute;left:324px;top:269px;font-size:12px;line-height:16px;color:#606266;white-space:nowrap;">DB_MySQL_ZhenHuaNanTong</div>
<div style="position:absolute;left:617px;top:269px;font-size:12px;line-height:16px;color:#606266;white-space:nowrap;">v2.1.1-beta1</div>
<div style="position:absolute;left:791px;width:123px;text-align:center;top:269px;font-size:12px;line-height:16px;color:#606266;white-space:nowrap;">采集应用</div>
<div style="position:absolute;left:914px;width:123px;text-align:center;top:269px;font-size:12px;line-height:16px;color:#606266;white-space:nowrap;">linux</div>
<div style="position:absolute;left:1048px;top:269px;font-size:12px;line-height:16px;color:#606266;white-space:nowrap;">DB_MySQL_ZhenHuaNanTong.v2.1.1-beta1.20...</div>
<div style="position:absolute;left:1337px;top:269px;font-size:12px;line-height:16px;color:#606266;white-space:nowrap;">MySQL通讯协议应用，该应用软件应用...</div>
<div style="position:absolute;left:1573px;width:141px;text-align:center;top:269px;font-size:12px;line-height:16px;color:#606266;white-space:nowrap;">2024-03-06 16:06:07</div>
<div style="position:absolute;left:324px;top:310px;font-size:12px;line-height:16px;color:#606266;white-space:nowrap;">GB_Demo_Jenkins</div>
<div style="position:absolute;left:617px;top:310px;font-size:12px;line-height:16px;color:#606266;white-space:nowrap;">v2.0.5-beta4</div>
<div style="position:absolute;left:791px;width:123px;text-align:center;top:310px;font-size:12px;line-height:16px;color:#606266;white-space:nowrap;">采集应用</div>
<div style="position:absolute;left:914px;width:123px;text-align:center;top:310px;font-size:12px;line-height:16px;color:#606266;white-space:nowrap;">linux</div>
<div style="position:absolute;left:1048px;top:310px;font-size:12px;line-height:16px;color:#606266;white-space:nowrap;">GB_Demo_Jenkins.v2.0.5-beta4.20240718.linu...</div>
<div style="position:absolute;left:1337px;top:310px;font-size:12px;line-height:16px;color:#606266;white-space:nowrap;">通讯协议应用，该应用软件应用于各类...</div>
<div style="position:absolute;left:1573px;width:141px;text-align:center;top:310px;font-size:12px;line-height:16px;color:#606266;white-space:nowrap;">2024-12-03 10:13:41</div>
<div style="position:absolute;left:324px;top:351px;font-size:12px;line-height:16px;color:#606266;white-space:nowrap;">GB_Demo_Jenkins</div>
<div style="position:absolute;left:617px;top:351px;font-size:12px;line-height:16px;color:#606266;white-space:nowrap;">v2.0.5-beta2</div>
<div style="position:absolute;left:791px;width:123px;text-align:center;top:351px;font-size:12px;line-height:16px;color:#606266;white-space:nowrap;">采集应用</div>
<div style="position:absolute;left:914px;width:123px;text-align:center;top:351px;font-size:12px;line-height:16px;color:#606266;white-space:nowrap;">arm</div>
<div style="position:absolute;left:1048px;top:351px;font-size:12px;line-height:16px;color:#606266;white-space:nowrap;">GB_Demo_Jenkins.v2.0.5-beta2.20240718.arm...</div>
<div style="position:absolute;left:1337px;top:351px;font-size:12px;line-height:16px;color:#606266;white-space:nowrap;">通讯协议应用，该应用软件应用于各类...</div>
<div style="position:absolute;left:1573px;width:141px;text-align:center;top:351px;font-size:12px;line-height:16px;color:#606266;white-space:nowrap;">2024-11-21 22:20:40</div>
<div style="position:absolute;left:324px;top:392px;font-size:12px;line-height:16px;color:#606266;white-space:nowrap;">PLC_Keyence_Ethernet</div>
<div style="position:absolute;left:617px;top:392px;font-size:12px;line-height:16px;color:#606266;white-space:nowrap;">v2.0.0-beta8</div>
<div style="position:absolute;left:791px;width:123px;text-align:center;top:392px;font-size:12px;line-height:16px;color:#606266;white-space:nowrap;">采集应用</div>
<div style="position:absolute;left:914px;width:123px;text-align:center;top:392px;font-size:12px;line-height:16px;color:#606266;white-space:nowrap;">linux</div>
<div style="position:absolute;left:1048px;top:392px;font-size:12px;line-height:16px;color:#606266;white-space:nowrap;">PLC_Keyence_Ethernet.v2.0.0-beta8.2023101...</div>
<div style="position:absolute;left:1337px;top:392px;font-size:12px;line-height:16px;color:#606266;white-space:nowrap;">私有协议通讯协议驱动,该驱动应用于各...</div>
<div style="position:absolute;left:1573px;width:141px;text-align:center;top:392px;font-size:12px;line-height:16px;color:#606266;white-space:nowrap;">2025-01-03 11:01:02</div>
<div style="position:absolute;left:324px;top:433px;font-size:12px;line-height:16px;color:#606266;white-space:nowrap;">PLC_Siemens_S7_Ethernet</div>
<div style="position:absolute;left:617px;top:433px;font-size:12px;line-height:16px;color:#606266;white-space:nowrap;">v2.0.0</div>
<div style="position:absolute;left:791px;width:123px;text-align:center;top:433px;font-size:12px;line-height:16px;color:#606266;white-space:nowrap;">采集应用</div>
<div style="position:absolute;left:914px;width:123px;text-align:center;top:433px;font-size:12px;line-height:16px;color:#606266;white-space:nowrap;">linux</div>
<div style="position:absolute;left:1048px;top:433px;font-size:12px;line-height:16px;color:#606266;white-space:nowrap;">PLC_Siemens_S7_Ethernet.v2.0.0.20230207.li...</div>
<div style="position:absolute;left:1337px;top:433px;font-size:12px;line-height:16px;color:#606266;white-space:nowrap;">西门子S7以太网协议通讯协议驱动,该驱...</div>
<div style="position:absolute;left:1573px;width:141px;text-align:center;top:433px;font-size:12px;line-height:16px;color:#606266;white-space:nowrap;">2024-12-03 09:44:21</div>
<div style="position:absolute;left:324px;top:474px;font-size:12px;line-height:16px;color:#606266;white-space:nowrap;">PLC_Mitsubishi_MC_Ethernet</div>
<div style="position:absolute;left:617px;top:474px;font-size:12px;line-height:16px;color:#606266;white-space:nowrap;">v2.0.0</div>
<div style="position:absolute;left:791px;width:123px;text-align:center;top:474px;font-size:12px;line-height:16px;color:#606266;white-space:nowrap;">采集应用</div>
<div style="position:absolute;left:914px;width:123px;text-align:center;top:474px;font-size:12px;line-height:16px;color:#606266;white-space:nowrap;">linux</div>
<div style="position:absolute;left:1048px;top:474px;font-size:12px;line-height:16px;color:#606266;white-space:nowrap;">PLC_Mitsubishi_MC_Ethernet.v2.0.0.20230207...</div>
<div style="position:absolute;left:1337px;top:474px;font-size:12px;line-height:16px;color:#606266;white-space:nowrap;">通讯协议应用，该应用软件应用于各类...</div>
<div style="position:absolute;left:1573px;width:141px;text-align:center;top:474px;font-size:12px;line-height:16px;color:#606266;white-space:nowrap;">2024-03-06 16:09:51</div>
<div style="position:absolute;left:324px;top:515px;font-size:12px;line-height:16px;color:#606266;white-space:nowrap;">PLC_Omron_Fins_Serial</div>
<div style="position:absolute;left:617px;top:515px;font-size:12px;line-height:16px;color:#606266;white-space:nowrap;">v2.0.0</div>
<div style="position:absolute;left:791px;width:123px;text-align:center;top:515px;font-size:12px;line-height:16px;color:#606266;white-space:nowrap;">采集应用</div>
<div style="position:absolute;left:914px;width:123px;text-align:center;top:515px;font-size:12px;line-height:16px;color:#606266;white-space:nowrap;">linux</div>
<div style="position:absolute;left:1048px;top:515px;font-size:12px;line-height:16px;color:#606266;white-space:nowrap;">PLC_Omron_Fins_Serial.v2.0.0.20230207.linux...</div>
<div style="position:absolute;left:1337px;top:515px;font-size:12px;line-height:16px;color:#606266;white-space:nowrap;">欧姆龙FINS Serial协议通讯协议驱动,该...</div>
<div style="position:absolute;left:1573px;width:141px;text-align:center;top:515px;font-size:12px;line-height:16px;color:#606266;white-space:nowrap;">2024-03-06 16:05:48</div>
<div style="position:absolute;left:324px;top:556px;font-size:12px;line-height:16px;color:#606266;white-space:nowrap;">PLC_Omron_Cmode</div>
<div style="position:absolute;left:617px;top:556px;font-size:12px;line-height:16px;color:#606266;white-space:nowrap;">v2.0.0</div>
<div style="position:absolute;left:791px;width:123px;text-align:center;top:556px;font-size:12px;line-height:16px;color:#606266;white-space:nowrap;">采集应用</div>
<div style="position:absolute;left:914px;width:123px;text-align:center;top:556px;font-size:12px;line-height:16px;color:#606266;white-space:nowrap;">linux</div>
<div style="position:absolute;left:1048px;top:556px;font-size:12px;line-height:16px;color:#606266;white-space:nowrap;">PLC_Omron_Cmode.v2.0.0.20230207.linux.tar.gz</div>
<div style="position:absolute;left:1337px;top:556px;font-size:12px;line-height:16px;color:#606266;white-space:nowrap;">通讯协议应用，该应用软件应用于各类...</div>
<div style="position:absolute;left:1573px;width:141px;text-align:center;top:556px;font-size:12px;line-height:16px;color:#606266;white-space:nowrap;">2024-03-06 16:06:37</div>
<div style="position:absolute;left:324px;top:597px;font-size:12px;line-height:16px;color:#606266;white-space:nowrap;">PLC_AB_Ethernetip</div>
<div style="position:absolute;left:617px;top:597px;font-size:12px;line-height:16px;color:#606266;white-space:nowrap;">v2.0.0</div>
<div style="position:absolute;left:791px;width:123px;text-align:center;top:597px;font-size:12px;line-height:16px;color:#606266;white-space:nowrap;">采集应用</div>
<div style="position:absolute;left:914px;width:123px;text-align:center;top:597px;font-size:12px;line-height:16px;color:#606266;white-space:nowrap;">linux</div>
<div style="position:absolute;left:1048px;top:597px;font-size:12px;line-height:16px;color:#606266;white-space:nowrap;">PLC_AB_Ethernetip.v2.0.0.20230920.linux.tar.gz</div>
<div style="position:absolute;left:1337px;top:597px;font-size:12px;line-height:16px;color:#606266;white-space:nowrap;">EtherNet/IP通讯协议驱动,该驱动应用于...</div>
<div style="position:absolute;left:1573px;width:141px;text-align:center;top:597px;font-size:12px;line-height:16px;color:#606266;white-space:nowrap;">2024-03-06 16:54:55</div>
<div style="position:absolute;left:324px;top:638px;font-size:12px;line-height:16px;color:#606266;white-space:nowrap;">PLC_AB_DF1_Serial</div>
<div style="position:absolute;left:617px;top:638px;font-size:12px;line-height:16px;color:#606266;white-space:nowrap;">v2.0.0</div>
<div style="position:absolute;left:791px;width:123px;text-align:center;top:638px;font-size:12px;line-height:16px;color:#606266;white-space:nowrap;">采集应用</div>
<div style="position:absolute;left:914px;width:123px;text-align:center;top:638px;font-size:12px;line-height:16px;color:#606266;white-space:nowrap;">linux</div>
<div style="position:absolute;left:1048px;top:638px;font-size:12px;line-height:16px;color:#606266;white-space:nowrap;">PLC_AB_DF1_Serial.v2.0.0.20231117.linux.tar.gz</div>
<div style="position:absolute;left:1337px;top:638px;font-size:12px;line-height:16px;color:#606266;white-space:nowrap;">ABPLC DF1协议串口采集驱动，支持的...</div>
<div style="position:absolute;left:1573px;width:141px;text-align:center;top:638px;font-size:12px;line-height:16px;color:#606266;white-space:nowrap;">2024-03-06 16:06:55</div>
<div style="position:absolute;left:324px;top:679px;font-size:12px;line-height:16px;color:#606266;white-space:nowrap;">OP2_MQTT_MagusIOT</div>
<div style="position:absolute;left:617px;top:679px;font-size:12px;line-height:16px;color:#606266;white-space:nowrap;">v1.4.2-beta4</div>
<div style="position:absolute;left:791px;width:123px;text-align:center;top:679px;font-size:12px;line-height:16px;color:#606266;white-space:nowrap;">上传应用</div>
<div style="position:absolute;left:914px;width:123px;text-align:center;top:679px;font-size:12px;line-height:16px;color:#606266;white-space:nowrap;">arm</div>
<div style="position:absolute;left:1048px;top:679px;font-size:12px;line-height:16px;color:#606266;white-space:nowrap;">OP2_MQTT_MagusIOT.v1.4.2-beta4.20241030...</div>
<div style="position:absolute;left:1337px;top:679px;font-size:12px;line-height:16px;color:#606266;white-space:nowrap;">通讯协议应用，该应用软件应用于各类...</div>
<div style="position:absolute;left:1573px;width:141px;text-align:center;top:679px;font-size:12px;line-height:16px;color:#606266;white-space:nowrap;">2024-11-11 11:20:46</div>
<div style="position:absolute;left:324px;top:720px;font-size:12px;line-height:16px;color:#606266;white-space:nowrap;">OP2_MQTT_MagusIOT</div>
<div style="position:absolute;left:617px;top:720px;font-size:12px;line-height:16px;color:#606266;white-space:nowrap;">v1.4.2-beta3</div>
<div style="position:absolute;left:791px;width:123px;text-align:center;top:720px;font-size:12px;line-height:16px;color:#606266;white-space:nowrap;">上传应用</div>
<div style="position:absolute;left:914px;width:123px;text-align:center;top:720px;font-size:12px;line-height:16px;color:#606266;white-space:nowrap;">linux</div>
<div style="position:absolute;left:1048px;top:720px;font-size:12px;line-height:16px;color:#606266;white-space:nowrap;">OP2_MQTT_MagusIOT.v1.4.2-beta3.20241030...</div>
<div style="position:absolute;left:1337px;top:720px;font-size:12px;line-height:16px;color:#606266;white-space:nowrap;">通讯协议应用，该应用软件应用于各类...</div>
<div style="position:absolute;left:1573px;width:141px;text-align:center;top:720px;font-size:12px;line-height:16px;color:#606266;white-space:nowrap;">2024-12-03 09:57:32</div>
<div style="position:absolute;left:324px;top:761px;font-size:12px;line-height:16px;color:#606266;white-space:nowrap;">GB_Modbus_Poll_TCP</div>
<div style="position:absolute;left:617px;top:761px;font-size:12px;line-height:16px;color:#606266;white-space:nowrap;">v1.1.8</div>
<div style="position:absolute;left:791px;width:123px;text-align:center;top:761px;font-size:12px;line-height:16px;color:#606266;white-space:nowrap;">采集应用</div>
<div style="position:absolute;left:914px;width:123px;text-align:center;top:761px;font-size:12px;line-height:16px;color:#606266;white-space:nowrap;">linux</div>
<div style="position:absolute;left:1048px;top:761px;font-size:12px;line-height:16px;color:#606266;white-space:nowrap;">GB_Modbus_Poll_TCP.v1.1.8.20250115.linux.t...</div>
<div style="position:absolute;left:1337px;top:761px;font-size:12px;line-height:16px;color:#606266;white-space:nowrap;">该驱动支持设备型号有支持标准Modbus...</div>
<div style="position:absolute;left:1573px;width:141px;text-align:center;top:761px;font-size:12px;line-height:16px;color:#606266;white-space:nowrap;">2025-04-24 09:24:25</div>
<div style="position:absolute;left:1714px;top:176px;width:164px;height:639px;background:#fff;"></div>
<div style="position:absolute;left:1713px;top:176px;width:165px;height:40px;background:#f8f8f9;border-left:1px solid #ebeef5;border-bottom:1px solid #ebeef5;box-sizing:border-box"></div>
<div style="position:absolute;left:1714px;width:164px;text-align:center;top:187px;font-size:12px;line-height:16px;color:#5c5e63;white-space:nowrap;font-weight:bold;">操作</div>
<div style="position:absolute;left:1714px;top:243px;width:164px;height:41px;background:#fff;border-bottom:1px solid #ebeef5;box-sizing:border-box"></div>
<div style="position:absolute;left:1714px;width:164px;text-align:center;top:255px;font-size:12px;line-height:16px;color:#33419a;white-space:nowrap;">批量下发</div>
<div style="position:absolute;left:1714px;top:284px;width:164px;height:41px;background:#fafafa;border-bottom:1px solid #ebeef5;box-sizing:border-box"></div>
<div style="position:absolute;left:1714px;width:164px;text-align:center;top:296px;font-size:12px;line-height:16px;color:#33419a;white-space:nowrap;">批量下发</div>
<div style="position:absolute;left:1714px;top:325px;width:164px;height:41px;background:#fff;border-bottom:1px solid #ebeef5;box-sizing:border-box"></div>
<div style="position:absolute;left:1714px;width:164px;text-align:center;top:337px;font-size:12px;line-height:16px;color:#33419a;white-space:nowrap;">批量下发</div>
<div style="position:absolute;left:1714px;top:366px;width:164px;height:41px;background:#fafafa;border-bottom:1px solid #ebeef5;box-sizing:border-box"></div>
<div style="position:absolute;left:1714px;width:164px;text-align:center;top:378px;font-size:12px;line-height:16px;color:#33419a;white-space:nowrap;">批量下发</div>
<div style="position:absolute;left:1714px;top:407px;width:164px;height:41px;background:#fff;border-bottom:1px solid #ebeef5;box-sizing:border-box"></div>
<div style="position:absolute;left:1714px;width:164px;text-align:center;top:419px;font-size:12px;line-height:16px;color:#33419a;white-space:nowrap;">批量下发</div>
<div style="position:absolute;left:1714px;top:448px;width:164px;height:41px;background:#fafafa;border-bottom:1px solid #ebeef5;box-sizing:border-box"></div>
<div style="position:absolute;left:1714px;width:164px;text-align:center;top:460px;font-size:12px;line-height:16px;color:#33419a;white-space:nowrap;">批量下发</div>
<div style="position:absolute;left:1714px;top:489px;width:164px;height:41px;background:#fff;border-bottom:1px solid #ebeef5;box-sizing:border-box"></div>
<div style="position:absolute;left:1714px;width:164px;text-align:center;top:501px;font-size:12px;line-height:16px;color:#33419a;white-space:nowrap;">批量下发</div>
<div style="position:absolute;left:1714px;top:530px;width:164px;height:41px;background:#fafafa;border-bottom:1px solid #ebeef5;box-sizing:border-box"></div>
<div style="position:absolute;left:1714px;width:164px;text-align:center;top:542px;font-size:12px;line-height:16px;color:#33419a;white-space:nowrap;">批量下发</div>
<div style="position:absolute;left:1714px;top:571px;width:164px;height:41px;background:#f5f7fa;border-bottom:1px solid #ebeef5;box-sizing:border-box"></div>
<div style="position:absolute;left:1714px;width:164px;text-align:center;top:583px;font-size:12px;line-height:16px;color:#33419a;white-space:nowrap;">批量下发</div>
<div style="position:absolute;left:1714px;top:612px;width:164px;height:41px;background:#fafafa;border-bottom:1px solid #ebeef5;box-sizing:border-box"></div>
<div style="position:absolute;left:1714px;width:164px;text-align:center;top:624px;font-size:12px;line-height:16px;color:#33419a;white-space:nowrap;">批量下发</div>
<div style="position:absolute;left:1714px;top:653px;width:164px;height:41px;background:#fff;border-bottom:1px solid #ebeef5;box-sizing:border-box"></div>
<div style="position:absolute;left:1714px;width:164px;text-align:center;top:665px;font-size:12px;line-height:16px;color:#33419a;white-space:nowrap;">批量下发</div>
<div style="position:absolute;left:1714px;top:694px;width:164px;height:41px;background:#fafafa;border-bottom:1px solid #ebeef5;box-sizing:border-box"></div>
<div style="position:absolute;left:1714px;width:164px;text-align:center;top:706px;font-size:12px;line-height:16px;color:#33419a;white-space:nowrap;">批量下发</div>
<div style="position:absolute;left:1714px;top:735px;width:164px;height:41px;background:#fff;border-bottom:1px solid #ebeef5;box-sizing:border-box"></div>
<div style="position:absolute;left:1714px;width:164px;text-align:center;top:747px;font-size:12px;line-height:16px;color:#33419a;white-space:nowrap;">批量下发</div>
<div style="position:absolute;left:1714px;top:776px;width:164px;height:39px;background:#fafafa;border-bottom:1px solid #ebeef5;box-sizing:border-box"></div>
<div style="position:absolute;left:1714px;width:164px;text-align:center;top:788px;font-size:12px;line-height:16px;color:#33419a;white-space:nowrap;">批量下发</div>
<div style="position:absolute;left:1713px;top:176px;width:1px;height:622px;background:#ebeef5"></div>
<div style="position:absolute;left:1715px;top:242px;width:163px;height:1px;background:#fff"></div>
<div style="position:absolute;left:1878px;top:243px;width:10px;height:555px;background:#f1f1f1"></div>
<div style="position:absolute;left:1880px;top:243px;width:8px;height:407px;background:#dcdcdc;border-radius:0 0 4px 4px"></div>
<div style="position:absolute;left:310px;top:152px;width:1574px;height:141px;box-sizing:border-box;border:4px solid #f94a4c;border-radius:3px"></div>
<div style="position:absolute;left:313px;top:844px;font-size:12px;line-height:16px;color:#606266;white-space:nowrap;">共 19条记录，每页 20 条，当前 1/1 页</div>
<div style="position:absolute;left:1535px;top:837px;width:100px;height:28px;box-sizing:border-box;border:1px solid #dcdfe6;border-radius:3px;background:#fff"></div>
<div style="position:absolute;left:1554px;top:844px;font-size:13px;line-height:16px;color:#606266;white-space:nowrap;">20条/页</div>
<svg style="position:absolute;left:1617px;top:849px" width="10" height="7" viewBox="0 0 10 7"><path d="M1 1 L5 5 L9 1" fill="none" stroke="#c0c4cc" stroke-width="1.2"/></svg>
<div style="position:absolute;left:1655px;top:837px;width:30px;height:28px;background:#f4f4f5;border-radius:2px"></div>
<svg style="position:absolute;left:1666px;top:845px" width="7" height="11" viewBox="0 0 7 11"><path d="M6 1 L1.5 5.5 L6 10" fill="none" stroke="#c0c4cc" stroke-width="1.3"/></svg>
<div style="position:absolute;left:1695px;top:837px;width:30px;height:28px;background:#33419a;border-radius:2px"></div>
<div style="position:absolute;left:1695px;top:843px;width:30px;text-align:center;font-size:13px;line-height:16px;font-weight:bold;color:#fff">1</div>
<div style="position:absolute;left:1735px;top:837px;width:30px;height:28px;background:#f4f4f5;border-radius:2px"></div>
<svg style="position:absolute;left:1746px;top:845px" width="7" height="11" viewBox="0 0 7 11"><path d="M1 1 L5.5 5.5 L1 10" fill="none" stroke="#c0c4cc" stroke-width="1.3"/></svg>
<div style="position:absolute;left:1794px;top:845px;font-size:12px;line-height:16px;color:#606266;white-space:nowrap;">前往</div>
<div style="position:absolute;left:1822px;top:837px;width:46px;height:28px;box-sizing:border-box;border:1px solid #dcdfe6;border-radius:3px;background:#fff"></div>
<div style="position:absolute;left:1822px;top:844px;width:46px;text-align:center;font-size:13px;line-height:16px;color:#606266">1</div>
<div style="position:absolute;left:1872px;top:845px;font-size:12px;line-height:16px;color:#606266;white-space:nowrap;">页</div>
<div style="position:absolute;left:282px;top:898px;width:1638px;text-align:center;font-size:12px;line-height:16px;color:#a3a3a3;white-space:nowrap"><span style="position:absolute;left:567px;top:0">Copyright © Shanghai Magus Technology Co., Ltd. All rights reserved</span><span style="position:absolute;left:951px;top:0">沪ICP备13012546号-3</span></div>
</body></html>
